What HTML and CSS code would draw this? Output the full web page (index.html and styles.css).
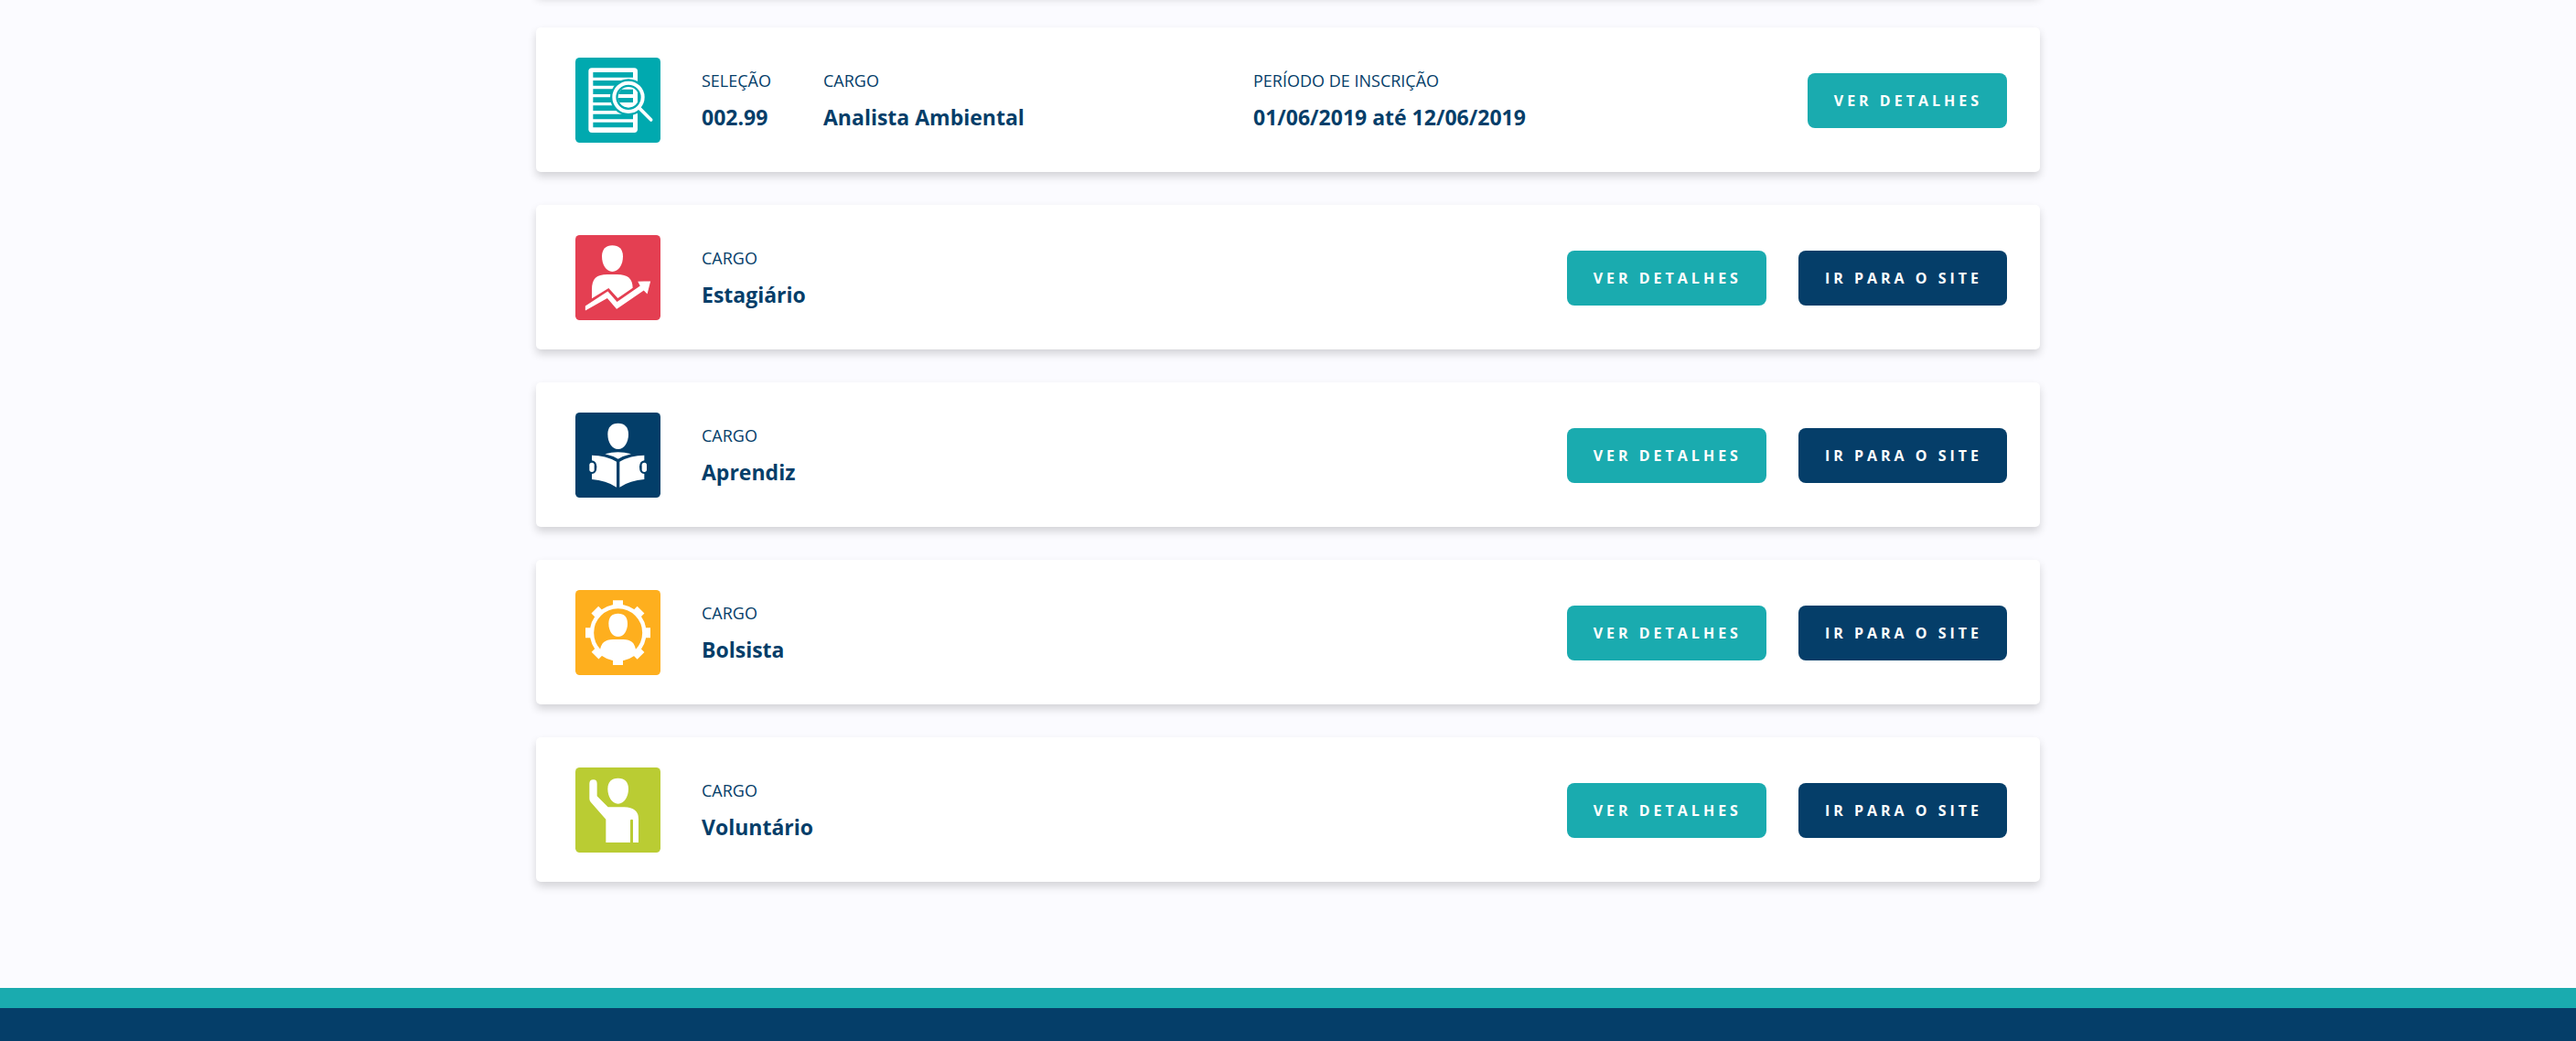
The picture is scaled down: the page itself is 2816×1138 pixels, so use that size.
FILE: index.html
```html
<!DOCTYPE html>
<html lang="pt-BR">
<head>
<meta charset="utf-8">
<meta name="viewport" content="width=device-width, initial-scale=1">
<title>Processos seletivos</title>
<link rel="stylesheet" href="styles.css">
</head>
<body>
<main class="page">
  <ul class="list">
    <li class="card card-empty"></li>

    <li class="card">
      <svg class="icon" viewBox="27 24 279 279" aria-hidden="true">
        <clipPath id="lens"><circle cx="201" cy="154" r="34"/></clipPath>
        <rect x="27" y="24" width="279" height="279" rx="14" fill="#00a9af"/>
        <rect x="70" y="58" width="161" height="212" rx="11" fill="#fff"/>
        <path fill="#00a9af" d="M85 72h131v17H85zM85 99h131v17H85zM85 127h131v17H85zM85 154h131v17H85zM85 181h131v17H85zM85 209h131v17H85zM85 236h131v17H85z"/>
        <circle cx="201" cy="154" r="60" fill="#00a9af"/>
        <path stroke="#00a9af" stroke-width="26" d="M232 190l20 20"/>
        <g clip-path="url(#lens)">
          <path fill="#fff" d="M160 110h71v90h-71z"/>
          <path fill="#00a9af" d="M160 128h56v16h-56zM160 156h56v15h-56z"/>
        </g>
        <circle cx="201" cy="154" r="47" fill="none" stroke="#fff" stroke-width="12"/>
        <path stroke="#fff" stroke-width="11" stroke-linecap="round" d="M235 188l40 40"/>
      </svg>
      <dl class="fields">
        <div class="field field-code"><dt>SELEÇÃO</dt><dd>002.99</dd></div>
        <div class="field field-role"><dt>CARGO</dt><dd>Analista Ambiental</dd></div>
        <div class="field"><dt>PERÍODO DE INSCRIÇÃO</dt><dd>01/06/2019 até 12/06/2019</dd></div>
      </dl>
      <div class="actions"><button class="btn" type="button">VER DETALHES</button></div>
    </li>

    <li class="card">
      <svg class="icon" viewBox="27 26 279 279" aria-hidden="true">
        <rect x="27" y="26" width="279" height="279" rx="14" fill="#e43f52"/>
        <path fill="#fff" d="M148 60C170 60 183 73 183 96C183 123 169 146 148 146C128 146 114 123 114 96C114 73 127 60 148 60z"/>
        <path fill="#fff" d="M81 234V205C81 169 96 155 132 155H164C199 155 215 169 215 199L166 233L136 200z"/>
        <path fill="#fff" stroke="#e43f52" stroke-width="5" d="M57 257L134 207L164 242L236 192L228 176L277 174L264 224L251 211L162 272L131 236L57 278z"/>
      </svg>
      <dl class="fields">
        <div class="field"><dt>CARGO</dt><dd>Estagiário</dd></div>
      </dl>
      <div class="actions"><button class="btn" type="button">VER DETALHES</button><a class="btn btn-site" href="#">IR PARA O SITE</a></div>
    </li>

    <li class="card">
      <svg class="icon" viewBox="27 25 279 279" aria-hidden="true">
        <rect x="27" y="25" width="279" height="279" rx="14" fill="#033e69"/>
        <path fill="#fff" d="M167 60C189 60 201 73 201 96C201 123 187 145 167 145C147 145 133 123 133 96C133 73 145 60 167 60z"/>
        <path fill="#fff" d="M124 161Q166 149 210 161Q185 167 167 177Q149 167 124 161z"/>
        <path fill="#fff" d="M81 165Q126 165 162 186V270Q127 247 81 244V226Q97 225 97 204Q97 184 81 182z"/>
        <path fill="#fff" d="M253 165Q208 165 172 186V270Q207 247 253 244V226Q237 225 237 204Q237 184 253 182z"/>
        <rect x="73" y="189" width="16" height="31" rx="8" fill="#fff"/>
        <rect x="245" y="189" width="16" height="31" rx="8" fill="#fff"/>
      </svg>
      <dl class="fields">
        <div class="field"><dt>CARGO</dt><dd>Aprendiz</dd></div>
      </dl>
      <div class="actions"><button class="btn" type="button">VER DETALHES</button><a class="btn btn-site" href="#">IR PARA O SITE</a></div>
    </li>

    <li class="card">
      <svg class="icon" viewBox="27 24 279 279" aria-hidden="true">
        <rect x="27" y="24" width="279" height="279" rx="14" fill="#feaf1e"/>
        <g fill="#fff">
          <path d="M150 58h33v20h-33zM150 250h33v20h-33zM60 148h20v33H60zM253 148h20v33h-20z"/>
          <path d="M150 58h33v20h-33zM150 250h33v20h-33zM60 148h20v33H60zM253 148h20v33h-20z" transform="rotate(45 167 164)"/>
        </g>
        <circle cx="167" cy="164" r="86" fill="none" stroke="#fff" stroke-width="13"/>
        <path fill="#fff" d="M167 101C187 101 198 112 198 134C198 158 185 177 167 177C149 177 136 158 136 134C136 112 147 101 167 101z"/>
        <path fill="#fff" d="M107 226C110 197 125 186 150 186H184C209 186 223 197 226 226Q204 252 167 252Q130 252 107 226z"/>
      </svg>
      <dl class="fields">
        <div class="field"><dt>CARGO</dt><dd>Bolsista</dd></div>
      </dl>
      <div class="actions"><button class="btn" type="button">VER DETALHES</button><a class="btn btn-site" href="#">IR PARA O SITE</a></div>
    </li>

    <li class="card">
      <svg class="icon" viewBox="27 18 279 279" aria-hidden="true">
        <rect x="27" y="18" width="279" height="279" rx="14" fill="#bacc33"/>
        <path fill="#fff" d="M167 53C189 53 201 66 201 88C201 115 187 137 167 137C147 137 133 115 133 88C133 66 145 53 167 53z"/>
        <path fill="#fff" d="M73 71Q73 58 86 58Q98 58 98 71V112L134 148H187Q234 149 234 187V264H216V191Q216 188 212 188Q207 188 207 192V264H127V188L77 131Q73 127 73 120z"/>
      </svg>
      <dl class="fields">
        <div class="field"><dt>CARGO</dt><dd>Voluntário</dd></div>
      </dl>
      <div class="actions"><button class="btn" type="button">VER DETALHES</button><a class="btn btn-site" href="#">IR PARA O SITE</a></div>
    </li>
  </ul>
</main>
<footer class="footer"></footer>
</body>
</html>
```
FILE: styles.css
```css
* {
  box-sizing: border-box;
}

body {
  margin: 0;
  min-height: 100vh;
  display: flex;
  flex-direction: column;
  background: #fbfbff;
  color: #053e69;
  font-family: "Open Sans", sans-serif;
}

.page {
  padding: 0 24px 116px;
  overflow: hidden;
}

.list {
  display: flex;
  flex-direction: column;
  gap: 36px;
  max-width: 1644px;
  margin: -40px auto 0;
  padding: 0;
  list-style: none;
}

.card {
  display: flex;
  align-items: center;
  gap: 45px;
  padding: 33px 36px 32px 43px;
  border-radius: 5px;
  background: #fff;
  box-shadow: 0 5px 10px rgba(0, 0, 0, 0.16);
}

.card-empty {
  height: 34px;
  padding: 0;
}

.icon {
  flex: none;
  width: 93px;
  height: 93px;
}

.fields {
  display: flex;
  flex: 1;
  margin: 0;
}

.field-code {
  width: 133px;
}

.field-role {
  width: 470px;
}

dt {
  font-size: 18px;
  line-height: 24px;
}

dd {
  margin: 12px 0 0;
  font-size: 23px;
  font-weight: 700;
  line-height: 32px;
}

.actions {
  display: flex;
  gap: 35px;
}

.btn {
  padding: 18px 27px 18px 29px;
  border: 0;
  border-radius: 8px;
  background: #1aabaf;
  color: #fff;
  font: 700 16px/24px "Open Sans", sans-serif;
  letter-spacing: 4px;
  text-decoration: none;
  white-space: nowrap;
}

.btn-site {
  background: #053e69;
}

.footer {
  flex: 1;
  min-height: 58px;
  border-top: 22px solid #1aabaf;
  background: #053e69;
}
```
